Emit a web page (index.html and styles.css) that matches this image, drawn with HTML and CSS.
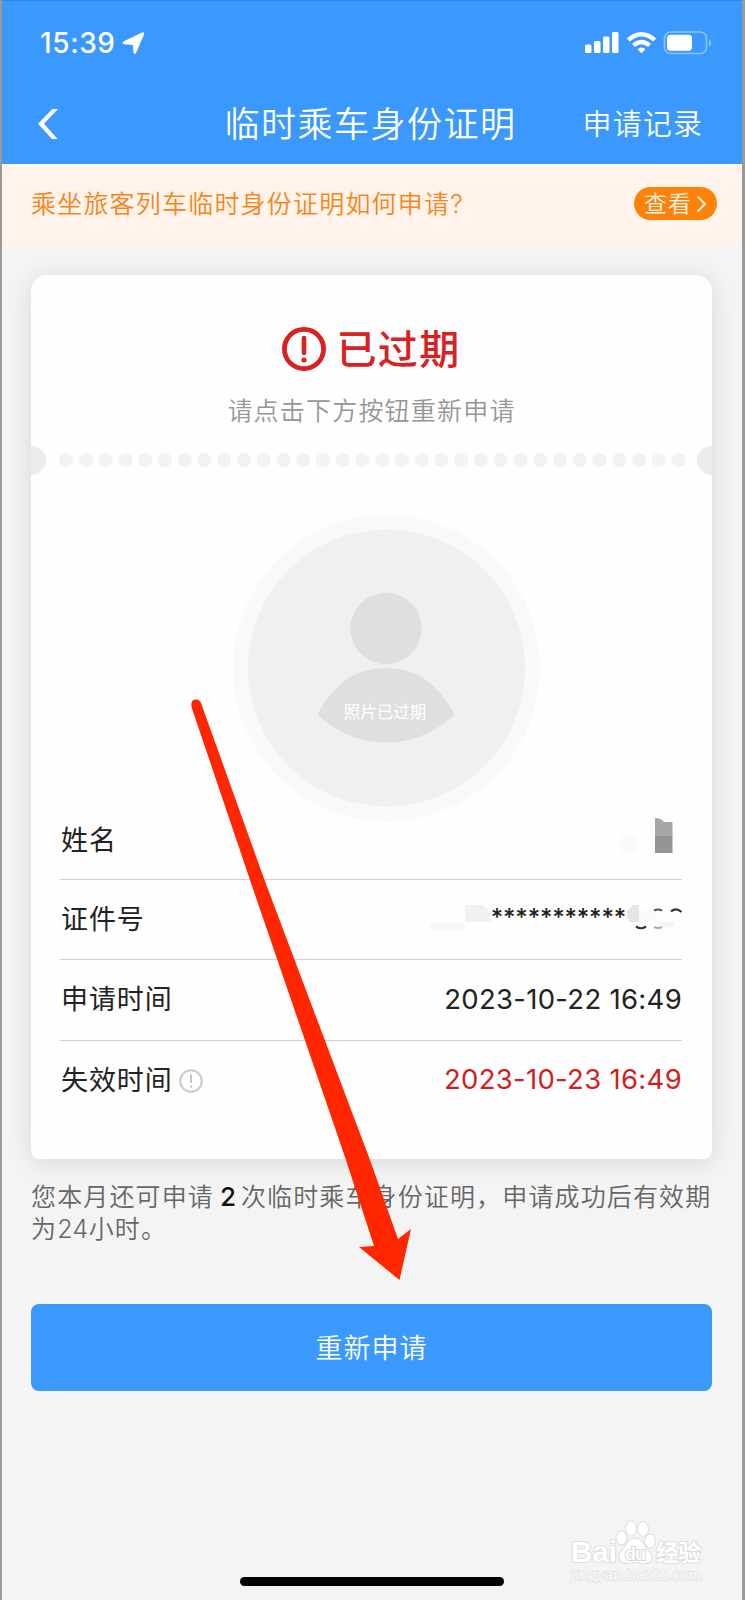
FILE: index.html
```html
<!DOCTYPE html>
<html lang="zh-CN">
<head>
<meta charset="utf-8">
<title>临时乘车身份证明</title>
<link rel="stylesheet" href="styles.css">
</head>
<body>
<div class="screen">
  <header class="header">
    <div class="status-bar">
      <div class="clock"><span class="time">15:39</span>
        <svg class="location" width="23" height="23" viewBox="0 0 23 23"><path d="M1.500 9.500 20 .5Q23-.5 22 2.500L14 21Q12.500 23.500 11.500 20.500L10.800 13 2.500 12.300Q-1 11.500 1.500 9.500Z" fill="#fff"/></svg>
      </div>
      <svg class="indicators" width="128" height="24" viewBox="0 0 128 24">
        <g fill="#fff"><rect x="0" y="13.500" width="6.500" height="8.500" rx="1.500"/><rect x="9" y="10" width="6.500" height="12" rx="1.500"/><rect x="18" y="5.500" width="6.500" height="16.500" rx="1.500"/><rect x="27" y="1" width="6.500" height="21" rx="1.500"/></g>
        <g fill="none" stroke="#fff" stroke-width="4.300"><path d="M43.300 9Q56.500-2.700 69.700 9"/><path d="M48.500 14.300Q56.500 7.500 64.500 14.300"/></g>
        <path d="M52.500 18.300Q56.500 14.800 60.500 18.300L56.500 22.300Z" fill="#fff"/>
        <rect x="79.500" y="1" width="42" height="21.500" rx="6" fill="none" stroke="#8bc3fe" stroke-width="1.700"/>
        <rect x="82" y="3.800" width="25" height="16" rx="3.500" fill="#fff"/>
        <path d="M124 8Q128.500 12 124 16Z" fill="#8bc3fe"/>
      </svg>
    </div>
    <nav class="nav">
      <svg class="back" width="22" height="32" viewBox="0 0 22 32"><path d="M1 15.800 15.500 1H21L7 15.800 20.500 31H15Z" fill="#fff"/></svg>
      <h1 class="title">临时乘车身份证明</h1>
      <a class="records">申请记录</a>
    </nav>
  </header>

  <section class="banner">
    <span class="question">乘坐旅客列车临时身份证明如何申请?</span>
    <a class="view"><span>查看</span><svg width="11" height="18" viewBox="0 0 11 18"><path d="M1.500 1.500 9 9 1.500 16.500" fill="none" stroke="#fff3e8" stroke-width="2"/></svg></a>
  </section>

  <main class="content">
    <section class="card">
      <div class="state">
        <svg width="44" height="44" viewBox="0 0 44 44"><circle cx="22" cy="22" r="19.600" fill="none" stroke="#d92121" stroke-width="4.800"/><path d="M22 11V26" stroke="#d92121" stroke-width="4.600" stroke-linecap="round"/><circle cx="22" cy="33" r="2.600" fill="#d92121"/></svg>
        <h2 class="state-text">已过期</h2>
      </div>
      <p class="hint">请点击下方按钮重新申请</p>
      <div class="perforation"><i class="notch left"></i><span class="dots"></span><i class="notch right"></i></div>
      <div class="avatar">
        <svg width="308" height="308" viewBox="0 0 308 308"><circle cx="153.500" cy="154" r="153.500" fill="#f9f9f9"/><circle cx="153.500" cy="154" r="138.500" fill="#f0f0f0"/><circle cx="153" cy="114.500" r="35.700" fill="#dfdfdf"/><path d="M84.500 201Q107.500 154 153 154T221.500 201Q190.500 228.500 153 228.500T84.500 201Z" fill="#dfdfdf"/></svg>
        <span class="photo-note">照片已过期</span>
      </div>
      <dl class="fields">
        <div class="row name"><dt>姓名</dt><dd><svg width="63" height="40" viewBox="0 0 63 40"><path d="M0 20h16v16H0z" fill="#fafafa"/><path d="M34 2q6 0 9 4h8.500v15H34Z" fill="#a7a7a7"/><path d="M34 20h17.500v17H34Z" fill="#949494"/></svg></dd></div>
        <div class="row"><dt>证件号</dt><dd class="masked">
          <svg width="61" height="26" viewBox="0 0 61 26"><path d="M0 18h35v7H0z" fill="#f6f6f6"/><path d="M35 0h17l9 7v10H35z" fill="#f1f1f1"/></svg><span class="stars">***********</span><svg class="tail" width="56" height="26" viewBox="0 0 56 26"><path d="M1 6 7 0h6v17H4L1 12Z" fill="#e5e5e5"/><path d="M13 4 30 6v11H13Z" fill="#fafafa"/><g fill="none" stroke="#333" stroke-width="2.200"><path d="M10 21.500Q15 25 20 21.500"/><path d="M28 5.500Q32 3.500 36 5.500" stroke="#555"/><path d="M45 6.500Q50 2 55.500 7"/><path d="M28 22Q32 24 36 22" stroke="#aaa"/></g><path d="M31 17h17v5.500H37Z" fill="#f4f4f4"/></svg></dd></div>
        <div class="row"><dt>申请时间</dt><dd>2023-10-22 16:49</dd></div>
        <div class="row"><dt>失效时间<svg class="info" width="24" height="24" viewBox="0 0 24 24"><circle cx="12" cy="12" r="10.800" fill="none" stroke="#c9c9c9" stroke-width="2"/><path d="M12 5.500V14M12 16.500V18.500" stroke="#c4c4c4" stroke-width="2"/></svg></dt><dd class="expired">2023-10-23 16:49</dd></div>
      </dl>
    </section>
    <p class="quota">您本月还可申请<b>2</b>次临时乘车身份证明，申请成功后有效期<br>为<span class="hours">24</span>小时。</p>
    <button class="apply">重新申请</button>
  </main>
  <div class="home-bar"></div>

  <svg class="watermark" width="140" height="66" viewBox="0 0 140 66">
    <g fill="#fff" stroke="#dedede" stroke-width="2" paint-order="stroke" font-weight="700">
      <text class="brand" x="3" y="44" font-size="29" textLength="46" lengthAdjust="spacingAndGlyphs">Bai</text>
      <ellipse cx="53.500" cy="20" rx="5" ry="6.500"/><ellipse cx="63" cy="10.500" rx="5" ry="7"/><ellipse cx="75" cy="11" rx="5" ry="7"/><ellipse cx="82" cy="23" rx="5" ry="6.500"/>
      <path d="M67 21C58 21 58 29 54 33C48 39 53 46 60 45Q67 43 75 45C84 46 86 38 80 33C76 28 75 21 67 21Z"/>
      <text class="brand" x="57" y="42" font-size="18" textLength="21" stroke="#d4d4d4">du</text>
      <text class="cjk" x="88" y="43" font-size="23" textLength="45" lengthAdjust="spacingAndGlyphs">经验</text>
      <text x="3" y="62" font-size="14.500" font-weight="400" textLength="131" stroke-width="1.500">jingyan.baidu.com</text>
    </g>
  </svg>
  <svg class="arrow" width="222" height="582" viewBox="0 0 222 582"><path d="M3.500 9Q2.500 1.500 8 1.500Q12 1.500 13 5L76.500 182 182 462 210 541 223 531 211.500 582 171 549 186 548 158 462 62 182Z" fill="#ff2600"/></svg>
</div>
</body>
</html>
```

FILE: styles.css
```css
* { box-sizing: border-box; margin: 0; padding: 0; }
body { width: 745px; height: 1600px; overflow: hidden; font-family: Inter, "Noto Sans CJK SC", sans-serif; }
.screen { position: relative; height: 1600px; background: #f4f4f4; border-left: 2px solid #999; border-right: 3px solid #999; display: flex; flex-direction: column; }

.header { height: 163.500px; background: #3b98fc; border-top: 1px solid #3187df; color: #fff; }
.status-bar { height: 84px; padding: 0 29px 0 38px; display: flex; justify-content: space-between; align-items: center; }
.clock { display: flex; align-items: center; gap: 6px; }
.time { font-size: 28px; font-weight: 550; letter-spacing: .6px; width: 76px; }
.nav { height: 77px; padding: 0 39px 0 35px; display: grid; grid-template-columns: 120px 1fr 120px; align-items: center; }
.title { padding: 0 0 5px 1px; font-size: 35px; font-weight: 350; letter-spacing: 1.5px; text-align: center; white-space: nowrap; }
.records { padding-bottom: 4px; font-size: 29px; font-weight: 350; letter-spacing: 1.100px; white-space: nowrap; justify-self: end; }

.banner { height: 81.500px; background: #fff3eb; padding: 0 25px 1px 29px; display: flex; justify-content: space-between; align-items: center; color: #f98416; }
.question { padding-bottom: 3px; font-size: 25px; letter-spacing: 1.200px; font-weight: 350; white-space: nowrap; }
.view { width: 83px; height: 33px; border-radius: 17px; background: #ff8208; color: #fff3e8; font-size: 23px; font-weight: 350; letter-spacing: 1px; display: flex; align-items: center; justify-content: center; gap: 4px; }
.view span { padding-bottom: 3px; }

.content { padding: 30px 30px 0 29px; }
.card { height: 884px; background: #fefefe; border-radius: 16px 16px 8px 8px; box-shadow: 0 3px 26px rgba(0, 0, 0, .12); padding-top: 46px; }
.state { height: 56px; padding-right: 1px; display: flex; align-items: center; justify-content: center; gap: 11px; color: #d92121; }
.state-text { padding-bottom: 4px; font-size: 40px; font-weight: 500; letter-spacing: 1.300px; }
.hint { height: 40px; margin-top: 14px; line-height: 40px; text-align: center; font-size: 25px; letter-spacing: 1.200px; font-weight: 350; color: #969696; }
.perforation { height: 30px; margin-top: 14px; display: flex; align-items: center; overflow: hidden; }
.notch { width: 15px; height: 29px; background: #ececec; }
.notch.left { border-radius: 0 15px 15px 0; }
.notch.right { border-radius: 15px 0 0 15px; }
.dots { flex: 1; height: 14px; margin: 0 9px 0 10px; background: radial-gradient(circle at 10.200px 7px, #f2f2f2 6.500px, transparent 7.500px) 0 0 / 19.750px 14px repeat-x; }
.avatar { position: relative; width: 308px; height: 308px; margin: 39px 0 0 202px; }
.avatar svg { display: block; }
.photo-note { position: absolute; left: 0; right: 4px; top: 185px; text-align: center; font-size: 16.500px; line-height: 26px; color: #fff; }
.fields { margin: -22px 30px 0 29px; font-size: 27px; color: #222; }
.row { height: 80.200px; border-bottom: 1.500px solid #d0d0d0; display: flex; align-items: center; justify-content: space-between; }
.row:last-child { border: 0; }
.row dt { padding: 0 0 4px 1px; display: flex; align-items: center; letter-spacing: .9px; }
.row dd { font-size: 27.500px; letter-spacing: .3px; padding-bottom: 2px; white-space: nowrap; }
.row.name dt { padding-bottom: 2px; }
.row.name dd { padding-bottom: 8px; }
.row.name svg { display: block; margin-right: -2px; }
.row dd.masked { display: flex; align-items: center; padding-bottom: 4px; margin-right: 0; }
.stars { font-size: 24px; font-weight: 500; letter-spacing: -.2px; line-height: 26px; height: 26px; }
.info { margin-left: 6px; margin-top: 5px; }
.row .expired { color: #d21e1e; padding-bottom: 4px; }
.quota { margin-top: 22px; font-size: 25px; line-height: 32px; letter-spacing: 1.130px; font-weight: 350; color: #666; white-space: nowrap; }
.quota b { font-size: 26px; font-weight: 500; color: #111; margin: 0 5px 0 6px; letter-spacing: 0; }
.hours { letter-spacing: .4px; }
.apply { display: block; width: 100%; height: 87px; margin-top: 59px; padding-bottom: 2px; border: 0; border-radius: 8px; background: #3b98fc; color: #fff; font: 350 27px "Noto Sans CJK SC", sans-serif; letter-spacing: 1px; }
.home-bar { width: 264px; height: 9px; margin: auto 0 14px 238px; border-radius: 5px; background: #000; }
.watermark { position: absolute; left: 566px; top: 1518px; font-family: "Open Sans", sans-serif; }
.brand { font-family: "Liberation Sans", sans-serif; }
.cjk { font-family: "Noto Sans CJK SC", sans-serif; }
.arrow { position: absolute; left: 186px; top: 698px; overflow: visible; }
```
